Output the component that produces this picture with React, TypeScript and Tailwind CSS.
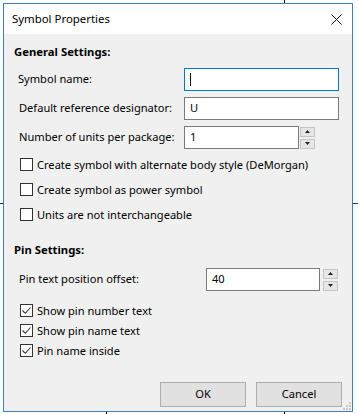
import React from 'react';

const font = { fontFamily: '"Noto Sans", "Open Sans", sans-serif' };

function Spinner() {
  return (
    <div className="flex flex-col gap-[2px] ml-[1px]">
      {['up', 'down'].map((d) =>
      <div
        key={d}
        className="w-[15px] h-[10px] bg-[#e6e6e6] border border-[#c4c4c4] flex items-center justify-center">
          <svg width="5" height="3" viewBox="0 0 5 3">
            {d === 'up' ?
          <polygon points="2.5,0 5,3 0,3" fill="#222" /> :
          <polygon points="0,0 5,0 2.5,3" fill="#222" />}
          </svg>
        </div>
      )}
    </div>);

}

function Check({ checked, label }: {checked?: boolean;label: string;}) {
  return (
    <div className="h-[17px] flex items-center pl-[15px]">
      <div className="w-[13px] h-[13px] border border-[#333] bg-white flex items-center justify-center shrink-0">
        {checked &&
        <svg width="11" height="11" viewBox="0 0 11 11">
            <path d="M1.5 5.5 L4.3 8.3 L9.5 2.5" fill="none" stroke="#333" strokeWidth="1.1" />
          </svg>
        }
      </div>
      <span className="ml-[4px] leading-[16px]">{label}</span>
    </div>);

}

export default function App() {
  return (
    <div className="relative w-[358px] h-[414px] bg-white overflow-hidden text-[11.1px] text-black" style={font}>
      {/* bits of the window behind */}
      <div className="absolute left-[284px] top-0 w-[1px] h-[3px] bg-black" />
      <div className="absolute left-[106px] top-[412px] w-[1px] h-[2px] bg-black" />
      <div className="absolute left-[284px] top-[412px] w-[1px] h-[2px] bg-black" />
      <div className="absolute left-0 top-[203px] w-[3px] h-[1px] bg-[#333]" />
      <div className="absolute left-[353px] top-[203px] w-[5px] h-[1px] bg-[#333]" />

      <div className="absolute left-[3px] top-[3px] w-[350px] h-[409px] border border-[#3a7fc6] flex flex-col bg-[#f0f0f0]">
        <div className="h-[30px] bg-white flex items-center justify-between pl-[8px] pr-[10px] shrink-0">
          <span className="text-[11.4px]">Symbol Properties</span>
          <svg width="11" height="11" viewBox="0 0 11 11">
            <path d="M0.5 0.5 L10.5 10.5 M10.5 0.5 L0.5 10.5" stroke="#111" strokeWidth="1" />
          </svg>
        </div>

        <div className="flex flex-col pl-[10px] relative flex-1">
          <div className="mt-[10px] h-[16px] leading-[16px] font-bold text-[11.3px]">General Settings:</div>

          <div className="mt-[8px] h-[23px] flex items-center">
            <span className="w-[170px] pl-[4px]">Symbol name:</span>
            <div className="w-[155px] h-[23px] border border-[#0078d7] bg-white flex items-center pl-[5px]">
              <div className="w-[1px] h-[13px] bg-black" />
            </div>
          </div>

          <div className="mt-[6px] h-[23px] flex items-center">
            <span className="w-[170px] pl-[5px]">Default reference designator:</span>
            <div className="w-[155px] h-[23px] border border-[#7a7a7a] bg-white flex items-center pl-[5px]">U</div>
          </div>

          <div className="mt-[6px] h-[23px] flex items-center">
            <span className="w-[170px] pl-[5px]">Number of units per package:</span>
            <div className="w-[115px] h-[23px] border border-[#7a7a7a] bg-white flex items-center pl-[5px]">1</div>
            <Spinner />
          </div>

          <div className="mt-[7px] flex flex-col gap-[8px] -ml-[10px] pl-[1px]">
            <Check label="Create symbol with alternate body style (DeMorgan)" />
            <Check label="Create symbol as power symbol" />
            <Check label="Units are not interchangeable" />
          </div>

          <div className="mt-[19px] h-[16px] leading-[16px] font-bold text-[11.3px]">Pin Settings:</div>

          <div className="mt-[10px] h-[23px] flex items-center">
            <span className="w-[192px] pl-[5px]">Pin text position offset:</span>
            <div className="w-[114px] h-[23px] border border-[#7a7a7a] bg-white flex items-center pl-[5px]">40</div>
            <div className="ml-[2px]">
              <Spinner />
            </div>
          </div>

          <div className="mt-[11px] flex flex-col gap-[3px] -ml-[10px] pl-[1px]">
            <Check checked label="Show pin number text" />
            <Check checked label="Show pin name text" />
            <Check checked label="Pin name inside" />
          </div>

          <div className="mt-auto mb-[4px] flex justify-end gap-[10px] pr-[10px]">
            <button className="w-[86px] h-[25px] bg-[#e1e1e1] border border-[#adadad] text-[11.1px]">OK</button>
            <button className="w-[86px] h-[25px] bg-[#e1e1e1] border border-[#adadad] text-[11.1px]">Cancel</button>
          </div>

          {/* size grip */}
          <svg className="absolute right-[1px] bottom-[1px]" width="8" height="8" viewBox="0 0 8 8">
            {[[6, 0], [6, 3], [3, 3], [6, 6], [3, 6], [0, 6]].map(([x, y], i) =>
            <rect key={i} x={x} y={y} width="2" height="2" fill="#c8c8c8" />
            )}
          </svg>
        </div>
      </div>
    </div>);

}
